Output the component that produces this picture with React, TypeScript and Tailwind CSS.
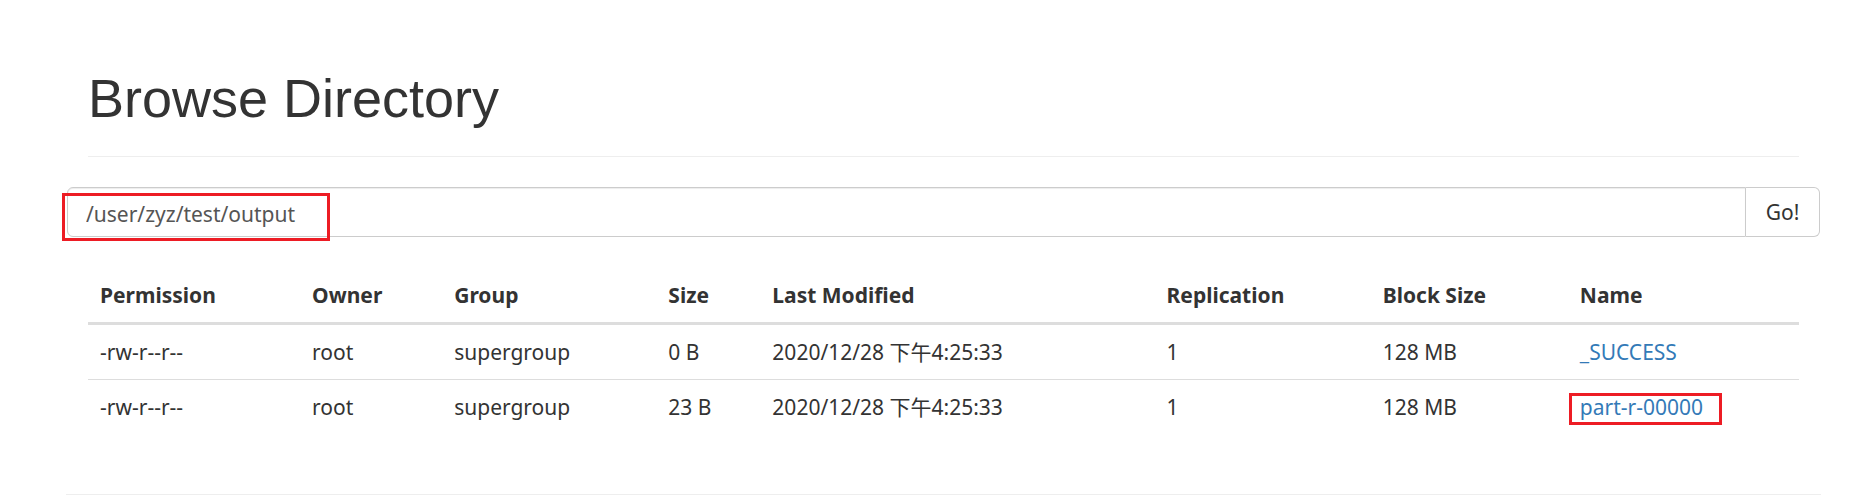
const rows = [
  { perm: '-rw-r--r--', owner: 'root', group: 'supergroup', size: '0 B', modified: '2020/12/28 下午4:25:33', repl: '1', block: '128 MB', name: '_SUCCESS', marked: false },
  { perm: '-rw-r--r--', owner: 'root', group: 'supergroup', size: '23 B', modified: '2020/12/28 下午4:25:33', repl: '1', block: '128 MB', name: 'part-r-00000', marked: true },
]

const headers = ['Permission', 'Owner', 'Group', 'Size', 'Last Modified', 'Replication', 'Block Size', 'Name']
const colWidths = ['w-[212px]', 'w-[142px]', 'w-[214px]', 'w-[104px]', 'w-[394px]', 'w-[216px]', 'w-[197px]', 'w-[231px]']

function App() {
  return (
    <div className="min-h-screen bg-white text-[#333] text-[21px] font-['Noto_Sans','Noto_Sans_CJK_SC',sans-serif]">
      <div className="ml-[66px] w-[1755px]">
        {/* page header */}
        <div className="px-[22px] pt-[69px]">
          <div className="border-b border-[#eee] pb-[28px]">
            <h1 className="text-[54px] leading-[59px] font-normal text-[#333] font-['Liberation_Sans',Arial,sans-serif]">
              Browse Directory
            </h1>
          </div>
        </div>

        {/* path form */}
        <div className="relative mt-[30px] ml-[1px] flex h-[50px] w-[1753px]">
          <input
            readOnly
            value="/user/zyz/test/output"
            className="flex-1 h-full rounded-l-[6px] border border-[#ccc] px-[18px] pt-[4px] text-[21px] text-[#555] outline-none shadow-[inset_0_1px_1px_rgba(0,0,0,0.075)]"
          />
          <button className="h-full w-[74px] rounded-r-[6px] border border-l-0 border-[#ccc] bg-white pt-[2px] text-[21px] text-[#333]">
            Go!
          </button>
          <div className="absolute left-[-5px] top-[6px] w-[268px] h-[48px] border-[3px] border-[#ed1c24] pointer-events-none" />
        </div>

        {/* listing */}
        <div className="px-[22px] mt-[31px]">
          <table className="w-full table-fixed border-collapse">
            <thead>
              <tr>
                {headers.map((h, i) => (
                  <th key={h} className={`${colWidths[i]} px-[12px] py-[12px] text-left font-bold leading-[30px] border-b-[3px] border-[#ddd]`}>
                    {h}
                  </th>
                ))}
              </tr>
            </thead>
            <tbody>
              {rows.map((r, idx) => (
                <tr key={r.name}>
                  {[r.perm, r.owner, r.group, r.size, r.modified, r.repl, r.block].map((v, i) => (
                    <td key={i} className={`px-[12px] py-[12px] leading-[30px] whitespace-nowrap ${idx > 0 ? 'border-t border-[#ddd]' : ''}`}>
                      {v}
                    </td>
                  ))}
                  <td className={`px-[12px] py-[12px] leading-[30px] ${idx > 0 ? 'border-t border-[#ddd]' : ''}`}>
                    <span className="relative inline-block">
                      <a href="#" className="text-[#337ab7]">{r.name}</a>
                      {r.marked && (
                        <span className="absolute left-[-11px] top-[1px] w-[153px] h-[32px] border-[3px] border-[#ed1c24] pointer-events-none" />
                      )}
                    </span>
                  </td>
                </tr>
              ))}
            </tbody>
          </table>
        </div>

        <div className="mt-[60px] border-t border-[#eee]" />
      </div>
    </div>
  )
}

export default App
